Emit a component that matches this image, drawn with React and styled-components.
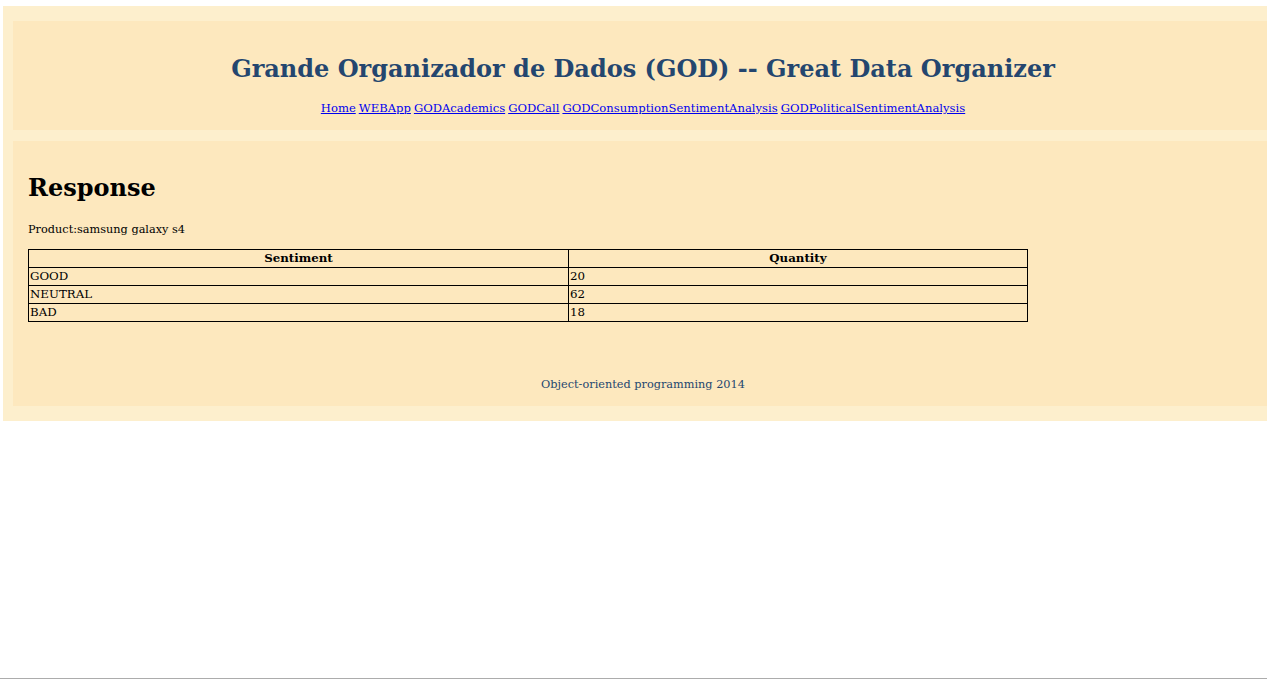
import React from 'react'
import styled, { createGlobalStyle } from 'styled-components'

const GlobalStyle = createGlobalStyle`
    html, body {
        margin: 0;
        padding: 0;
        background: #fff;
    }
    body {
        font-family: "DejaVu Serif", "Liberation Serif", Georgia, serif;
        font-size: 11.3px;
        color: #000;
    }
`

const Screen = styled.div`
    display: flex;
    flex-direction: column;
    min-height: 100vh;
    width: 1267px;
    overflow: hidden;
`

const Wrapper = styled.div`
    margin: 6px 0 0 3px;
    width: 1280px;
    padding: 15px 10px 15px 10px;
    box-sizing: border-box;
    background-color: #fdefcd;
    display: flex;
    flex-direction: column;
    gap: 11px;
`

const Header = styled.div`
    background-color: #fde8be;
    height: 109px;
    padding-top: 31px;
    box-sizing: border-box;
    text-align: center;
`

const Title = styled.h1`
    margin: 0;
    font-size: 24px;
    line-height: 34px;
    font-weight: bold;
    color: #24466f;
`

const Nav = styled.div`
    margin-top: 14px;
    font-size: 11.6px;
    line-height: 16px;
`

const NavLink = styled.a`
    color: #0000ee;
    text-decoration: underline;
    margin-right: 3px;
    &:last-child {
        margin-right: 0;
    }
`

const Content = styled.div`
    background-color: #fde8be;
    height: 265px;
    padding: 30px 15px 0 15px;
    box-sizing: border-box;
`

const Heading = styled.h2`
    margin: 0;
    font-size: 24px;
    line-height: 34px;
    font-weight: bold;
`

const Product = styled.p`
    margin: 17px 0 11px 0;
    line-height: 16px;
`

const Table = styled.table`
    width: 1000px;
    border-collapse: collapse;
    font-size: 11.8px;
`

const Th = styled.th`
    border: 1px solid #000;
    padding: 0 1px;
    height: 17px;
    line-height: 15px;
    font-weight: bold;
    text-align: center;
    width: ${props => props.width || 'auto'};
`

const Td = styled.td`
    border: 1px solid #000;
    padding: 0 1px;
    height: 17px;
    line-height: 15px;
    text-align: left;
`

const Footer = styled.p`
    margin: 55px 0 0 0;
    text-align: center;
    color: #24466f;
    line-height: 16px;
`

const ScrollEdge = styled.div`
    margin-top: auto;
    height: 1px;
    margin-bottom: 1px;
    background-color: #acacac;
`

const links = [
    'Home',
    'WEBApp',
    'GODAcademics',
    'GODCall',
    'GODConsumptionSentimentAnalysis',
    'GODPoliticalSentimentAnalysis'
]

const rows = [
    { sentiment: 'GOOD', quantity: 20 },
    { sentiment: 'NEUTRAL', quantity: 62 },
    { sentiment: 'BAD', quantity: 18 }
]

export default function App() {
    return (
        <Screen>
            <GlobalStyle />
            <Wrapper>
                <Header>
                    <Title>Grande Organizador de Dados (GOD) -- Great Data Organizer</Title>
                    <Nav>
                        {links.map(link => (
                            <NavLink key={link} href="#">{link}</NavLink>
                        ))}
                    </Nav>
                </Header>
                <Content>
                    <Heading>Response</Heading>
                    <Product>Product:samsung galaxy s4</Product>
                    <Table>
                        <thead>
                            <tr>
                                <Th width="537px">Sentiment</Th>
                                <Th>Quantity</Th>
                            </tr>
                        </thead>
                        <tbody>
                            {rows.map(row => (
                                <tr key={row.sentiment}>
                                    <Td>{row.sentiment}</Td>
                                    <Td>{row.quantity}</Td>
                                </tr>
                            ))}
                        </tbody>
                    </Table>
                    <Footer>Object-oriented programming 2014</Footer>
                </Content>
            </Wrapper>
            <ScrollEdge />
        </Screen>
    )
}
